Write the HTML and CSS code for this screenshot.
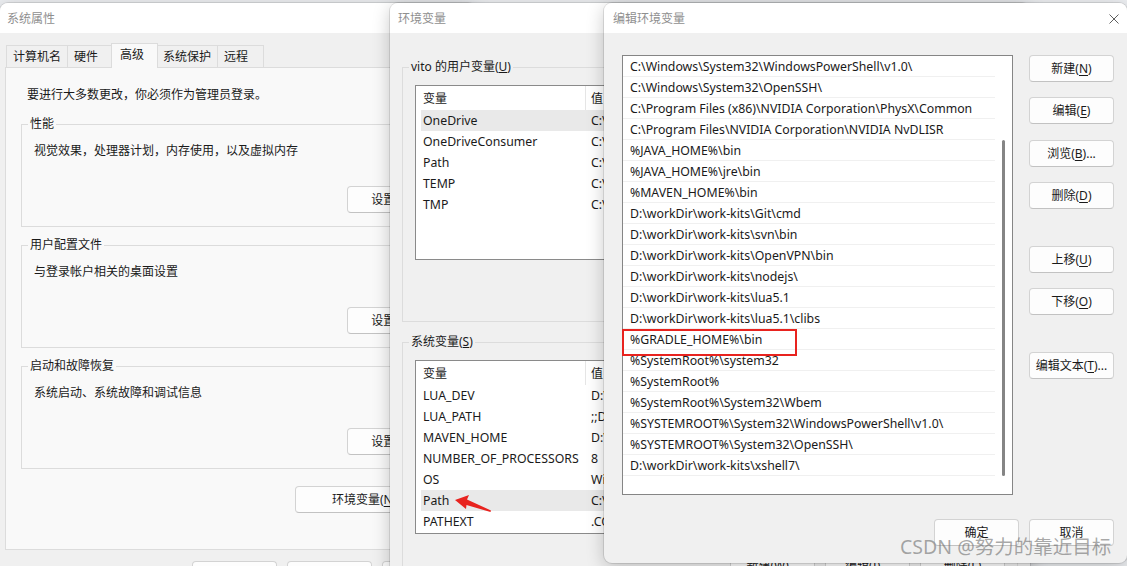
FILE: index.html
```html
<!DOCTYPE html>
<html lang="zh-CN">
<head>
<meta charset="UTF-8" />
<title>编辑环境变量</title>
<link rel="stylesheet" href="styles.css">
</head>
<body>
<div class="desktop">

  <!-- 系统属性 -->
  <div class="win win-sys">
    <div class="titlebar">系统属性</div>
    <div class="sys-body">
      <div class="tabs">
        <div class="tab">计算机名</div>
        <div class="tab">硬件</div>
        <div class="tab active">高级</div>
        <div class="tab">系统保护</div>
        <div class="tab">远程</div>
      </div>
      <div class="tab-panel">
        <p class="intro">要进行大多数更改，你必须作为管理员登录。</p>
        <fieldset class="group">
          <legend>性能</legend>
          <p>视觉效果，处理器计划，内存使用，以及虚拟内存</p>
          <div class="btn-row"><button class="btn btn-set">设置(<u>S</u>)...</button></div>
        </fieldset>
        <fieldset class="group">
          <legend>用户配置文件</legend>
          <p>与登录帐户相关的桌面设置</p>
          <div class="btn-row"><button class="btn btn-set">设置(<u>E</u>)...</button></div>
        </fieldset>
        <fieldset class="group">
          <legend>启动和故障恢复</legend>
          <p>系统启动、系统故障和调试信息</p>
          <div class="btn-row"><button class="btn btn-set">设置(<u>T</u>)...</button></div>
        </fieldset>
        <div class="env-row"><button class="btn btn-env">环境变量(<u>N</u>)...</button></div>
      </div>
      <div class="dlg-buttons">
        <button class="btn">确定</button>
        <button class="btn">取消</button>
        <button class="btn">应用(<u>A</u>)</button>
      </div>
    </div>
  </div>

  <!-- 环境变量 -->
  <div class="win win-env">
    <div class="titlebar">环境变量</div>
    <div class="env-body">
      <fieldset class="group env-group user-group">
        <legend>vito 的用户变量(<u>U</u>)</legend>
        <div class="listview lv-user">
          <div class="lv-head"><div class="lv-hname">变量</div><div class="lv-hval">值</div></div>
          <div class="lv-row sel"><span class="lv-name">OneDrive</span><span class="lv-val">C:\</span></div>
          <div class="lv-row"><span class="lv-name">OneDriveConsumer</span><span class="lv-val">C:\</span></div>
          <div class="lv-row"><span class="lv-name">Path</span><span class="lv-val">C:\</span></div>
          <div class="lv-row"><span class="lv-name">TEMP</span><span class="lv-val">C:\</span></div>
          <div class="lv-row"><span class="lv-name">TMP</span><span class="lv-val">C:\</span></div>
        </div>
      </fieldset>
      <fieldset class="group env-group sys-group">
        <legend>系统变量(<u>S</u>)</legend>
        <div class="listview lv-sys">
          <div class="lv-head"><div class="lv-hname">变量</div><div class="lv-hval">值</div></div>
          <div class="lv-row"><span class="lv-name">LUA_DEV</span><span class="lv-val">D:\</span></div>
          <div class="lv-row"><span class="lv-name">LUA_PATH</span><span class="lv-val">;;D</span></div>
          <div class="lv-row"><span class="lv-name">MAVEN_HOME</span><span class="lv-val">D:\</span></div>
          <div class="lv-row"><span class="lv-name">NUMBER_OF_PROCESSORS</span><span class="lv-val">8</span></div>
          <div class="lv-row"><span class="lv-name">OS</span><span class="lv-val">Wi</span></div>
          <div class="lv-row sel"><span class="lv-name">Path</span><span class="lv-val">C:\</span></div>
          <div class="lv-row"><span class="lv-name">PATHEXT</span><span class="lv-val">.CO</span></div>
        </div>
        <div class="btn-row">
          <button class="btn">新建(<u>W</u>)...</button>
          <button class="btn">编辑(<u>I</u>)...</button>
          <button class="btn">删除(<u>L</u>)</button>
        </div>
      </fieldset>
    </div>
  </div>

  <!-- annotation arrow -->
  <svg class="arrow" viewBox="0 0 50 26" width="50" height="26">
    <polygon points="5,10 19,5 17,9.5 41,20.5 40.5,22 16.5,15 16,19" fill="#e8231f"/>
  </svg>

  <!-- 编辑环境变量 -->
  <div class="win win-edit">
    <div class="titlebar">
      <span>编辑环境变量</span>
      <svg class="close" viewBox="0 0 10 10" width="10" height="10">
        <path d="M0.5 0.5 9.5 9.5 M9.5 0.5 0.5 9.5" stroke="#5f5f5f" stroke-width="1" fill="none"/>
      </svg>
    </div>
    <div class="edit-body">
      <div class="edit-main">
        <div class="pathlist">
          <div class="path-rows">
            <div class="path-row">C:\Windows\System32\WindowsPowerShell\v1.0\</div>
            <div class="path-row">C:\Windows\System32\OpenSSH\</div>
            <div class="path-row">C:\Program Files (x86)\NVIDIA Corporation\PhysX\Common</div>
            <div class="path-row">C:\Program Files\NVIDIA Corporation\NVIDIA NvDLISR</div>
            <div class="path-row">%JAVA_HOME%\bin</div>
            <div class="path-row">%JAVA_HOME%\jre\bin</div>
            <div class="path-row">%MAVEN_HOME%\bin</div>
            <div class="path-row">D:\workDir\work-kits\Git\cmd</div>
            <div class="path-row">D:\workDir\work-kits\svn\bin</div>
            <div class="path-row">D:\workDir\work-kits\OpenVPN\bin</div>
            <div class="path-row">D:\workDir\work-kits\nodejs\</div>
            <div class="path-row">D:\workDir\work-kits\lua5.1</div>
            <div class="path-row">D:\workDir\work-kits\lua5.1\clibs</div>
            <div class="path-row marked">%GRADLE_HOME%\bin</div>
            <div class="path-row">%SystemRoot%\system32</div>
            <div class="path-row">%SystemRoot%</div>
            <div class="path-row">%SystemRoot%\System32\Wbem</div>
            <div class="path-row">%SYSTEMROOT%\System32\WindowsPowerShell\v1.0\</div>
            <div class="path-row">%SYSTEMROOT%\System32\OpenSSH\</div>
            <div class="path-row">D:\workDir\work-kits\xshell7\</div>
          </div>
          <div class="scroll-track"><div class="scroll-thumb"></div></div>
        </div>
        <div class="side-btns">
          <button class="btn">新建(<u>N</u>)</button>
          <button class="btn mt15">编辑(<u>E</u>)</button>
          <button class="btn">浏览(<u>B</u>)...</button>
          <button class="btn mt15">删除(<u>D</u>)</button>
          <button class="btn mt37">上移(<u>U</u>)</button>
          <button class="btn mt15">下移(<u>O</u>)</button>
          <button class="btn mt37">编辑文本(<u>T</u>)...</button>
        </div>
      </div>
      <div class="edit-footer">
        <button class="btn">确定</button>
        <button class="btn">取消</button>
      </div>
    </div>
  </div>

  <div class="watermark">CSDN @努力的靠近目标</div>
</div>
</body>
</html>
```

FILE: styles.css
```css
* {
  box-sizing: border-box;
}
html, body {
  margin: 0;
}
body {
  width: 1127px;
  height: 566px;
  overflow: hidden;
  background: #eceef1;
  font-family: "Noto Sans", "Noto Sans CJK SC", sans-serif;
  font-size: 12px;
  line-height: 16px;
  color: #1a1a1a;
}
p {
  margin: 0;
}
.desktop {
  position: relative;
  width: 1127px;
  height: 566px;
  overflow: hidden;
}

/* windows */
.win {
  position: absolute;
  top: 3px;
  background: #f0f0f0;
  border-radius: 8px 8px 0 0;
  overflow: hidden;
  box-shadow: 0 0 0 1px rgba(0, 0, 0, 0.1), 0 4px 18px rgba(0, 0, 0, 0.22);
}
.win-sys {
  left: 0;
  width: 476px;
  height: 620px;
}
.win-env {
  left: 390px;
  width: 640px;
  height: 620px;
}
.win-edit {
  left: 604px;
  width: 523px;
  height: 560px;
  border-radius: 8px;
}
.titlebar {
  height: 30px;
  background: #fff;
  color: #8f8f8f;
  display: flex;
  align-items: center;
  padding: 1px 0 0 7px;
}
.win-env .titlebar {
  padding-left: 8px;
}
.win-edit .titlebar {
  padding-left: 9px;
  justify-content: space-between;
}
.close {
  margin-right: 8px;
}

/* buttons */
.btn {
  font: inherit;
  color: #1a1a1a;
  height: 27px;
  width: 85px;
  padding: 0;
  background: #fdfdfd;
  border: 1px solid #d3d3d3;
  border-bottom-color: #c2c2c2;
  border-radius: 4px;
}
.btn u {
  text-underline-offset: 2px;
}
.btn-row {
  display: flex;
  justify-content: flex-end;
  gap: 10px;
}

/* 系统属性 */
.sys-body {
  padding: 10px 6px 0 5px;
}
.tabs {
  display: flex;
  height: 24px;
  padding-left: 1px;
  position: relative;
  z-index: 1;
}
.tab {
  height: 22px;
  margin-top: 2px;
  min-width: 47px;
  padding: 3px 6px 0;
  border: 1px solid #dcdcdc;
  border-bottom: none;
  margin-right: -1px;
  background: #f0f0f0;
}
.tab.active {
  height: 25px;
  margin-top: 0;
  margin-left: -2px;
  margin-right: -2px;
  padding: 3px 8px 0;
  background: #f9f9f9;
  position: relative;
}
.tab-panel {
  background: #f9f9f9;
  border: 1px solid #dcdcdc;
  padding: 19px 0 36px 0;
}
.intro {
  margin: 0 0 13px 21px;
}
.group {
  margin: 0 13px 10px 15px;
  padding: 11px 12px 13px 12px;
  border: 1px solid #dcdcdc;
  min-width: 0;
}
.group legend {
  padding: 0 2px;
  margin-left: -6px;
  line-height: 16px;
}
.group p {
  margin-bottom: 27px;
}
.btn-set {
  width: 96px;
}
.env-row {
  display: flex;
  justify-content: flex-end;
  margin: 17px 26px 0 0;
}
.btn-env {
  width: 148px;
}
.dlg-buttons {
  display: flex;
  justify-content: flex-end;
  gap: 10px;
  margin-top: 11px;
  padding-right: 3px;
}

/* 环境变量 */
.env-body {
  padding: 26px 12px 0 12px;
}
.env-group {
  margin: 0;
  padding: 10px 12px 16px 12px;
}
.user-group {
  padding-bottom: 61px;
}
.env-group .btn-row {
  margin-top: 18px;
}
.sys-group {
  margin-top: 12px;
}
.listview {
  background: #fff;
  border: 1px solid #8a8a8a;
  overflow: hidden;
  font-size: 12.3px;
}
.lv-user {
  height: 175px;
}
.lv-sys {
  height: 174px;
}
.lv-head {
  display: flex;
  height: 24px;
  font-size: 12px;
}
.lv-hname {
  width: 170px;
  padding: 5px 0 0 7px;
  border-right: 1px solid #e5e5e5;
}
.lv-hval {
  padding: 5px 0 0 5px;
}
.lv-row {
  display: flex;
  align-items: center;
  height: 21px;
  margin-left: 5px;
  padding-top: 1px;
}
.lv-row.sel {
  background: #e9e9e9;
}
.lv-name {
  width: 164px;
  padding-left: 2px;
  white-space: nowrap;
}
.lv-val {
  padding-left: 6px;
}

.arrow {
  position: absolute;
  left: 450px;
  top: 490px;
}

/* 编辑环境变量 */
.edit-body {
  padding: 22px 13px 0 18px;
}
.edit-main {
  display: flex;
  gap: 16px;
}
.pathlist {
  width: 391px;
  height: 440px;
  background: #fff;
  border: 1px solid #858585;
  display: flex;
  font-size: 12.3px;
}
.path-rows {
  width: 372px;
}
.path-row {
  height: 21px;
  padding: 3px 0 0 7px;
  border-bottom: 1px solid #f0f0f0;
  white-space: nowrap;
}
.path-row.marked {
  position: relative;
}
.path-row.marked::after {
  content: "";
  position: absolute;
  left: -1px;
  top: 0;
  width: 171px;
  height: 23px;
  border: 2.5px solid #e8231f;
}
.scroll-track {
  width: 17px;
  padding: 84px 0 0 7px;
}
.scroll-thumb {
  width: 3px;
  height: 336px;
  border-radius: 2px;
  background: #858585;
}
.side-btns {
  display: flex;
  flex-direction: column;
}
.side-btns .btn {
  margin-top: 16px;
}
.side-btns .btn:first-child {
  margin-top: 0;
}
.side-btns .mt15 {
  margin-top: 15px;
}
.side-btns .mt37 {
  margin-top: 37px;
}
.edit-footer {
  display: flex;
  justify-content: flex-end;
  gap: 10px;
  margin-top: 24px;
}

.watermark {
  position: absolute;
  left: 900px;
  top: 535px;
  font-size: 19.5px;
  line-height: 24px;
  color: rgba(110, 110, 110, 0.6);
  white-space: nowrap;
}
```
